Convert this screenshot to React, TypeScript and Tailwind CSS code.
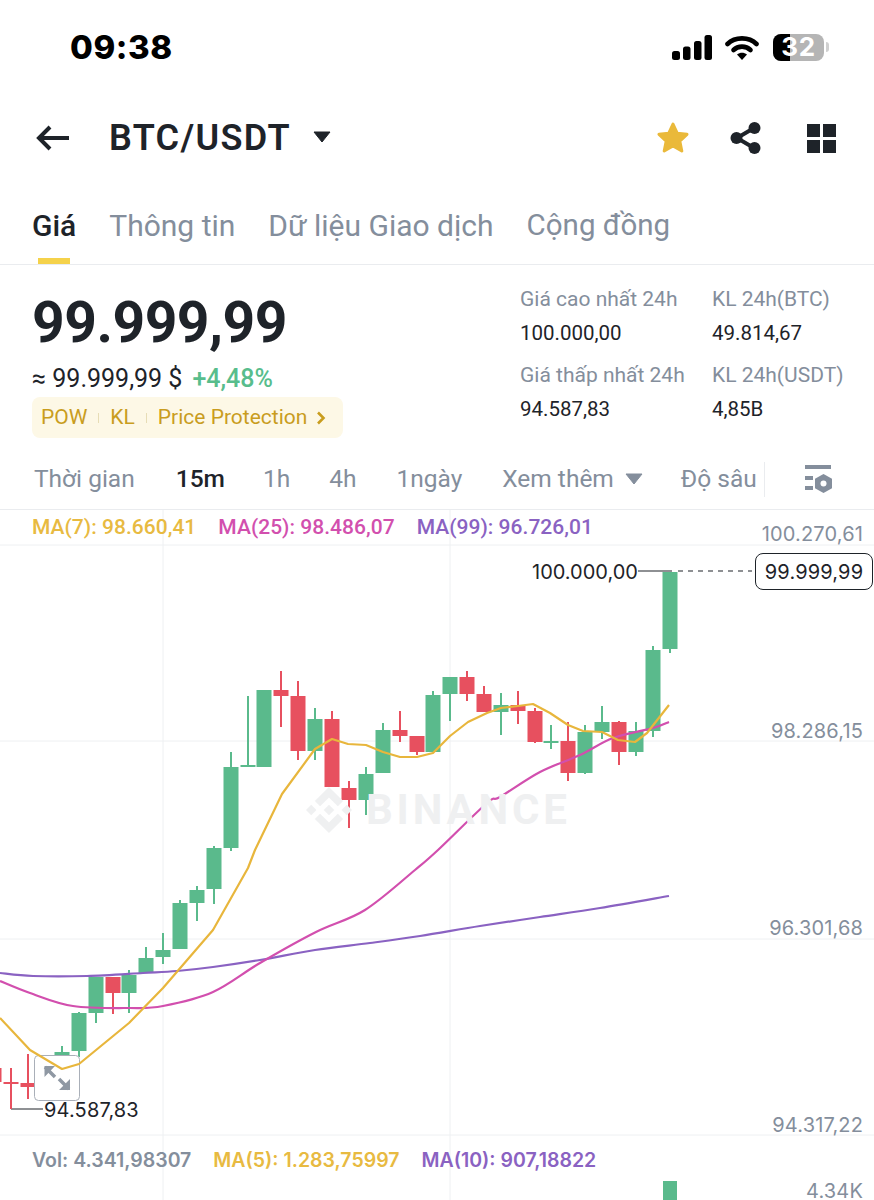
import { SiBinance } from "react-icons/si";

const GREEN = "#5ABA8C";
const RED = "#E7505F";

// x centre, body top, body bottom, wick top, wick bottom, up?
const candles: [number, number, number, number, number, boolean][] = [
  [-6, 1068, 1082, 1060, 1090, false],
  [11, 1082, 1084, 1068, 1109, false],
  [28, 1083, 1087, 1054, 1099, false],
  [62, 1052, 1055, 1046, 1058, true],
  [79, 1013, 1051, 1012, 1057, true],
  [96, 977, 1013, 977, 1023, true],
  [113, 977, 993, 977, 1014, false],
  [129, 975, 993, 970, 1013, true],
  [146, 958, 973, 947, 973, true],
  [163, 950, 957, 933, 964, true],
  [180, 903, 949, 900, 949, true],
  [197, 890, 903, 886, 921, true],
  [214, 848, 889, 846, 904, true],
  [231, 767, 848, 752, 851, true],
  [248, 765, 767, 696, 767, true],
  [264, 690, 767, 690, 767, true],
  [281, 690, 696, 671, 727, false],
  [298, 696, 751, 681, 760, false],
  [315, 719, 751, 708, 760, true],
  [332, 719, 787, 711, 787, false],
  [349, 788, 800, 781, 828, false],
  [366, 774, 800, 767, 815, true],
  [383, 730, 773, 723, 773, true],
  [400, 730, 736, 711, 742, false],
  [417, 736, 752, 736, 755, false],
  [433, 695, 752, 691, 752, true],
  [450, 677, 694, 677, 721, true],
  [467, 677, 694, 671, 701, false],
  [484, 694, 712, 686, 712, false],
  [501, 705, 712, 693, 735, true],
  [518, 705, 711, 691, 724, false],
  [535, 711, 742, 708, 743, false],
  [551, 741, 743, 725, 749, true],
  [568, 741, 773, 722, 781, false],
  [585, 732, 773, 725, 774, true],
  [602, 722, 732, 706, 739, true],
  [619, 722, 752, 721, 765, false],
  [636, 731, 752, 722, 756, true],
  [653, 650, 731, 646, 737, true],
  [670, 572, 649, 572, 653, true],
];

const ma7 =
  "0,1018 30,1050 62,1069 79,1064 129,1023 163,988 213,930 248,868 255,850 282,794 315,749 332,739 348,744 366,745 383,752 400,757 417,757 433,753 450,736 468,722 487,713 501,708 518,706 533,704 550,713 568,725 583,731 602,732 618,740 635,742 647,733 669,705";
const ma25 =
  "0,981 30,993 73,1006 130,1008 163,1006 213,992 260,963 316,932 365,910 415,870 438,850 487,803 500,797 540,772 580,755 613,738 653,728 669,722";
const ma99 =
  "0,973 33,976 87,976 143,973 177,971 213,967 260,960 315,950 370,943 420,936 480,926 540,917 600,908 669,896";

// catmull-rom through the sampled points, so the averages don't look faceted
function smooth(points: string) {
  const p = points.split(" ").map((s) => s.split(",").map(Number));
  let d = `M${p[0][0]} ${p[0][1]}`;
  for (let i = 0; i < p.length - 1; i++) {
    const a = p[Math.max(i - 1, 0)];
    const b = p[i];
    const c = p[i + 1];
    const e = p[Math.min(i + 2, p.length - 1)];
    const c1x = b[0] + (c[0] - a[0]) / 6;
    const c1y = b[1] + (c[1] - a[1]) / 6;
    const c2x = c[0] - (e[0] - b[0]) / 6;
    const c2y = c[1] - (e[1] - b[1]) / 6;
    d += ` C${c1x} ${c1y} ${c2x} ${c2y} ${c[0]} ${c[1]}`;
  }
  return d;
}

function StatusBar() {
  return (
    <div className="flex h-[94px] items-center justify-between pl-[70px] pr-[45px]">
      <span className="font-['Inter'] text-[33px] font-extrabold leading-none tracking-[0.6px] text-black">09:38</span>
      <div className="flex items-center">
        <svg width="40" height="25" viewBox="0 0 40 25" className="mr-[13px]">
          <rect x="0" y="16" width="8" height="9" rx="2.5" fill="#000" />
          <rect x="11" y="11.5" width="7.5" height="13.5" rx="2.5" fill="#000" />
          <rect x="22" y="6" width="7.5" height="19" rx="2.5" fill="#000" />
          <rect x="32.5" y="0" width="7.5" height="25" rx="2.5" fill="#000" />
        </svg>
        <svg width="34" height="25" viewBox="0 0 34 25" className="mr-[14px]">
          <path d="M2.5 9 C10 1.5 24 1.5 31.5 9" fill="none" stroke="#000" strokeWidth="4.6" strokeLinecap="round" />
          <path d="M8.5 15 C13 10.5 21 10.5 25.5 15" fill="none" stroke="#000" strokeWidth="4.6" strokeLinecap="round" />
          <path d="M12 19.5 L17 25 L22 19.5 C19 17 15 17 12 19.5 Z" fill="#000" />
        </svg>
        <div className="relative flex h-[27px] w-[51px] rounded-[8px] bg-[#b5b5b5]">
          <div className="h-full w-[17px] rounded-l-[8px] bg-black" />
          <span className="absolute inset-0 flex items-center justify-center font-['Inter'] text-[26px] font-bold leading-none tracking-[0.6px] text-white">
            32
          </span>
        </div>
        <div className="ml-[2px] h-[10px] w-[3px] rounded-r-full bg-[#d0d0d0]" />
      </div>
    </div>
  );
}

function Header() {
  return (
    <div className="flex h-[88px] items-center pl-[36px] pr-[38px]">
      <svg width="34" height="26" viewBox="0 0 34 26" className="mr-[39px]">
        <path d="M14 2 L3 13 L14 24 M3 13 H33" fill="none" stroke="#1E2329" strokeWidth="4" />
      </svg>
      <span className="font-['Roboto'] text-[36px] font-semibold leading-none tracking-[1.3px] text-[#1E2329]">BTC/USDT</span>
      <svg width="18" height="12" viewBox="0 0 18 12" className="ml-[22px] -mt-[3px]">
        <path d="M1 1 H17 L9 11 Z" fill="#1E2329" stroke="#1E2329" strokeWidth="1" strokeLinejoin="round" />
      </svg>
      <div className="ml-auto flex items-center">
        <svg width="32" height="32" viewBox="0 0 32 32" className="mr-[41px]">
          <path
            d="M16 2 L20.2 11.2 L30 12.3 L22.8 19.1 L24.8 29 L16 24 L7.2 29 L9.2 19.1 L2 12.3 L11.8 11.2 Z"
            fill="#EAB93A"
            stroke="#EAB93A"
            strokeWidth="3"
            strokeLinejoin="round"
          />
        </svg>
        <svg width="32" height="32" viewBox="0 0 32 32" className="mr-[45px]">
          <path d="M24 6 L7 16 L24 26" fill="none" stroke="#1E2329" strokeWidth="4" />
          <circle cx="24.5" cy="6" r="6" fill="#1E2329" />
          <circle cx="6.5" cy="16" r="6" fill="#1E2329" />
          <circle cx="24.5" cy="26" r="6" fill="#1E2329" />
        </svg>
        <div className="grid h-[29px] w-[29px] grid-cols-2 gap-[3px]">
          <div className="bg-[#1E2329]" />
          <div className="bg-[#1E2329]" />
          <div className="bg-[#1E2329]" />
          <div className="bg-[#1E2329]" />
        </div>
      </div>
    </div>
  );
}

function Tabs() {
  return (
    <div className="flex h-[83px] gap-[33px] border-b border-[#EAECEF] pl-[32px] font-['Roboto'] text-[30px] leading-none">
      <div className="relative flex h-full flex-col pt-[29px] font-medium text-[#1E2329]">
        Giá
        <div className="absolute bottom-0 left-[6px] h-[6px] w-[32px] bg-[#F5D24B]" />
      </div>
      <div className="pt-[29px] text-[#848E9C]">Thông tin</div>
      <div className="pt-[29px] text-[#848E9C]">Dữ liệu Giao dịch</div>
      <div className="pt-[29px] text-[29.5px] text-[#848E9C]">Cộng đồng</div>
    </div>
  );
}

function Stat({ label, value }: { label: string; value: string }) {
  return (
    <div className="flex flex-col gap-[10px]">
      <span className="whitespace-nowrap text-[21px] leading-[24px] text-[#848E9C]">{label}</span>
      <span className="whitespace-nowrap text-[20.5px] leading-[24px] text-[#1E2329]">{value}</span>
    </div>
  );
}

function PriceBlock() {
  return (
    <div className="flex h-[187px] justify-between pl-[32px] pr-[32px] font-['Roboto']">
      <div className="pt-[28px]">
        <div className="text-[57px] font-bold leading-[60px] tracking-[-0.5px] text-[#1E2329]">99.999,99</div>
        <div className="mt-[12px] flex items-center text-[25px] leading-[28px]">
          <span className="text-[#1E2329]">≈ 99.999,99 $</span>
          <span className="ml-[10px] font-medium text-[#58BD8C]">+4,48%</span>
        </div>
        <div className="mt-[4px] flex h-[41px] w-[311px] items-center rounded-[8px] bg-[#FDF8E6] pl-[9px] text-[21px] leading-none text-[#C99D1E]">
          POW
          <span className="mx-[11px] h-[10px] w-px bg-[#E7DDB6]" />
          KL
          <span className="mx-[11px] h-[10px] w-px bg-[#E7DDB6]" />
          Price Protection
          <svg width="10" height="14" viewBox="0 0 10 14" className="ml-[9px]">
            <path d="M2 1.5 L7.5 7 L2 12.5" fill="none" stroke="#C99D1E" strokeWidth="2.6" />
          </svg>
        </div>
      </div>
      <div className="grid grid-cols-[192px_130px] content-start gap-y-[18px] pt-[22px]">
        <Stat label="Giá cao nhất 24h" value="100.000,00" />
        <Stat label="KL 24h(BTC)" value="49.814,67" />
        <Stat label="Giá thấp nhất 24h" value="94.587,83" />
        <Stat label="KL 24h(USDT)" value="4,85B" />
      </div>
    </div>
  );
}

function Intervals() {
  return (
    <div className="flex h-[58px] items-center border-b border-[#EAECEF] pb-[2px] font-['Roboto'] text-[24.5px] leading-none text-[#848E9C]">
      <span className="ml-[34px]">Thời gian</span>
      <span className="ml-[41px] font-medium text-[#1E2329]">15m</span>
      <span className="ml-[38px]">1h</span>
      <span className="ml-[39px]">4h</span>
      <span className="ml-[40px]">1ngày</span>
      <span className="ml-[40px]">Xem thêm</span>
      <svg width="18" height="12" viewBox="0 0 18 12" className="ml-[11px] -mt-[2px]">
        <path d="M1 1 H17 L9 11 Z" fill="#848E9C" stroke="#848E9C" strokeLinejoin="round" />
      </svg>
      <span className="ml-[38px]">Độ sâu</span>
      <div className="ml-[7px] h-[35px] w-px bg-[#EAECEF]" />
      <svg width="28" height="28" viewBox="0 0 28 28" className="ml-[40px] -mt-[2px]">
        <rect x="0" y="0" width="26" height="4" fill="#848E9C" />
        <rect x="0" y="11" width="8" height="4" fill="#848E9C" />
        <rect x="0" y="21" width="8" height="4" fill="#848E9C" />
        <path d="M18.5 9 L27 13.7 V23.3 L18.5 28 L10 23.3 V13.7 Z" fill="#848E9C" />
        <circle cx="18.5" cy="18.5" r="3" fill="#fff" />
      </svg>
    </div>
  );
}

function Chart() {
  return (
    <div className="relative h-[690px] overflow-hidden font-['Inter'] text-[20px] leading-none tracking-[0.15px]">
      <svg className="absolute inset-0" width="874" height="690" viewBox="0 510 874 690">
        {[545, 741, 939, 1135].map((y) => (
          <line key={y} x1="0" x2="874" y1={y} y2={y} stroke="#EEF0F2" />
        ))}
        {[163, 450].map((x) => (
          <line key={x} x1={x} x2={x} y1="510" y2="1200" stroke="#EEF0F2" />
        ))}
        <line x1="638" x2="672" y1="571" y2="571" stroke="#1E2329" strokeWidth="1.2" />
        <line x1="678" x2="752" y1="571" y2="571" stroke="#1E2329" strokeWidth="1.2" strokeDasharray="5 5" />
        <path d="M11 1085 V1109 H43" fill="none" stroke="#1E2329" strokeWidth="1" />
        {candles.map(([x, top, bottom, wt, wb, up]) => (
          <g key={x} fill={up ? GREEN : RED}>
            <rect x={x - 1} y={wt} width="2" height={wb - wt} />
            <rect x={x - 7.5} y={top} width="15" height={bottom - top} />
          </g>
        ))}
        <rect x="34.5" y="1055.5" width="45" height="45" rx="4" fill="#fff" stroke="#A9AFB8" />
        <path d="M45 1067 L55 1077 M69 1089 L59 1079" stroke="#8F98A3" strokeWidth="3.5" />
        <path d="M44.5 1066 H55 L44.5 1077 Z M70 1090 H59 L70 1079 Z" fill="#8F98A3" />
        <path d={smooth(ma99)} fill="none" stroke="#8A62C2" strokeWidth="2.2" />
        <path d={smooth(ma25)} fill="none" stroke="#D24FAE" strokeWidth="2.2" />
        <polyline points={ma7} fill="none" stroke="#E8B63C" strokeWidth="2.2" strokeLinejoin="round" />
        <rect x="663" y="1181" width="14" height="19" fill={GREEN} />
      </svg>

      {/* watermark */}
      <div className="absolute left-[306px] top-[277px] flex items-center gap-[14px]">
        <SiBinance size={46} color="#EFF0F1" />
        <span className="font-['Roboto'] text-[42px] font-bold leading-none tracking-[3.8px] text-[#EFF0F1]">BINANCE</span>
      </div>

      {/* MA legend */}
      <div className="absolute left-[32px] top-[7px] flex gap-[22px] font-['Roboto'] text-[21px] font-medium leading-[20px] tracking-[0.03px]">
        <span className="text-[#E8BA41]">MA(7): 98.660,41</span>
        <span className="text-[#D24FAE]">MA(25): 98.486,07</span>
        <span className="text-[#8A62C2]">MA(99): 96.726,01</span>
      </div>

      {/* axis labels */}
      <span className="absolute right-[11px] top-[14px] text-[#848E9C]">100.270,61</span>
      <span className="absolute right-[11px] top-[211px] text-[#848E9C]">98.286,15</span>
      <span className="absolute right-[11px] top-[408px] text-[#848E9C]">96.301,68</span>
      <span className="absolute right-[11px] top-[605px] text-[#848E9C]">94.317,22</span>
      <span className="absolute right-[11px] top-[672px] leading-[18px] text-[#848E9C]">4.34K</span>

      {/* price markers */}
      <span className="absolute left-[532px] top-[52px] tracking-normal text-[#1E2329]">100.000,00</span>
      <span className="absolute left-[755px] top-[43px] flex h-[37px] w-[118px] items-center justify-center rounded-[8px] border border-[#1E2329] bg-white text-[#1E2329]">
        99.999,99
      </span>
      <span className="absolute left-[44px] top-[590px] text-[#1E2329]">94.587,83</span>

      {/* volume legend */}
      <div className="absolute left-[32px] top-[640px] flex gap-[22px] text-[19.5px] font-semibold leading-[20px] tracking-normal">
        <span className="text-[#848E9C]">Vol: 4.341,98307</span>
        <span className="text-[#E8BA41]">MA(5): 1.283,75997</span>
        <span className="text-[#8A62C2]">MA(10): 907,18822</span>
      </div>
    </div>
  );
}

export default function App() {
  return (
    <div className="h-[1200px] w-[874px] overflow-hidden bg-white">
      <StatusBar />
      <Header />
      <Tabs />
      <PriceBlock />
      <Intervals />
      <Chart />
    </div>
  );
}
